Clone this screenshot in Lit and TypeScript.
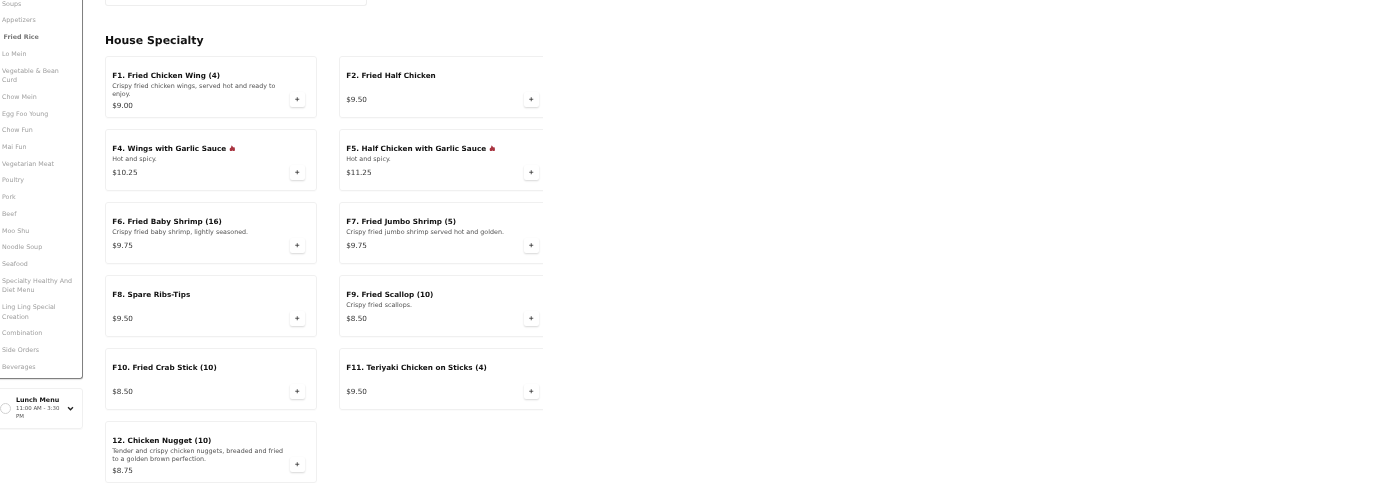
import { LitElement, html, css, nothing } from "lit";
import { customElement } from "lit/decorators.js";

interface Dish {
  name: string;
  desc?: string;
  price: string;
  hot?: boolean;
}

const CATEGORIES = [
  "Soups",
  "Appetizers",
  "Fried Rice",
  "Lo Mein",
  "Vegetable & Bean Curd",
  "Chow Mein",
  "Egg Foo Young",
  "Chow Fun",
  "Mai Fun",
  "Vegetarian Meat",
  "Poultry",
  "Pork",
  "Beef",
  "Moo Shu",
  "Noodle Soup",
  "Seafood",
  "Specialty Healthy And Diet Menu",
  "Ling Ling Special Creation",
  "Combination",
  "Side Orders",
  "Beverages",
];

const DISHES: Dish[] = [
  { name: "F1. Fried Chicken Wing (4)", desc: "Crispy fried chicken wings, served hot and ready to enjoy.", price: "$9.00" },
  { name: "F2. Fried Half Chicken", price: "$9.50" },
  { name: "F4. Wings with Garlic Sauce", desc: "Hot and spicy.", price: "$10.25", hot: true },
  { name: "F5. Half Chicken with Garlic Sauce", desc: "Hot and spicy.", price: "$11.25", hot: true },
  { name: "F6. Fried Baby Shrimp (16)", desc: "Crispy fried baby shrimp, lightly seasoned.", price: "$9.75" },
  { name: "F7. Fried Jumbo Shrimp (5)", desc: "Crispy fried jumbo shrimp served hot and golden.", price: "$9.75" },
  { name: "F8. Spare Ribs-Tips", price: "$9.50" },
  { name: "F9. Fried Scallop (10)", desc: "Crispy fried scallops.", price: "$8.50" },
  { name: "F10. Fried Crab Stick (10)", price: "$8.50" },
  { name: "F11. Teriyaki Chicken on Sticks (4)", price: "$9.50" },
  { name: "12. Chicken Nugget (10)", desc: "Tender and crispy chicken nuggets, breaded and fried to a golden brown perfection.", price: "$8.75" },
];

@customElement("app-root")
export class AppRoot extends LitElement {
  static styles = css`
    :host {
      display: block;
      height: 500px;
      overflow: hidden;
      background: #fff;
      font-family: "DejaVu Sans", sans-serif;
      text-rendering: geometricPrecision;
      color: #111;
    }

    /* the reference is a soft, grayscale downscale of a larger page */
    .page {
      display: flex;
      align-items: flex-start;
      height: 500px;
      overflow: hidden;
      filter: blur(0.3px);
    }

    /* sidebar sticks out past the left edge of the window */
    .side {
      flex: none;
      width: 90px;
      margin-left: -7px;
      margin-top: -8px;
    }

    .cats {
      box-sizing: border-box;
      height: 386.6px;
      padding: 4.1px 9px 0 8px;
      border: 1px solid #808080;
      border-top: none;
      border-radius: 0 0 3px 3px;
      box-shadow: 0 1px 1px rgba(0, 0, 0, 0.12);
    }

    .cat {
      padding: 3.565px 0;
      font-size: 6.35px;
      line-height: 9.6px;
      color: #a0a0a0;
    }

    .cat.active {
      margin-left: 1.5px;
      font-weight: 700;
      color: #777;
    }

    .hours {
      box-sizing: border-box;
      height: 41px;
      margin-top: 9.5px;
      display: flex;
      align-items: center;
      padding: 0 8.5px 0 6px;
      border: 1px solid #f0f0f0;
      border-radius: 3px;
      box-shadow: 0 1px 1px rgba(0, 0, 0, 0.03);
    }

    .radio {
      flex: none;
      box-sizing: border-box;
      width: 11px;
      height: 11px;
      margin-right: 5px;
      border: 1px solid #d0d0d0;
      border-radius: 50%;
    }

    .hours-text {
      flex: 1;
      min-width: 0;
    }

    .hours-title {
      font-size: 6.35px;
      line-height: 10px;
      font-weight: 700;
    }

    .hours-time {
      font-size: 5.45px;
      line-height: 7.8px;
      color: #555;
    }

    .chevron {
      flex: none;
      width: 7px;
      height: 7px;
      margin-left: 4px;
    }

    .main {
      flex: none;
      width: 438px;
      margin-left: 22px;
      overflow: hidden;
    }

    .prev {
      box-sizing: border-box;
      width: 262px;
      height: 6px;
      border: 1px solid #eee;
      border-top: none;
      border-radius: 0 0 3px 3px;
    }

    h2 {
      margin: 26.5px 0 0;
      font-size: 10.9px;
      line-height: 15px;
      font-weight: 700;
    }

    .grid {
      display: grid;
      grid-template-columns: 212px 212px;
      column-gap: 22px;
      row-gap: 11px;
      margin-top: 8.5px;
      width: 446px;
    }

    .card {
      box-sizing: border-box;
      height: 62px;
      display: flex;
      align-items: flex-end;
      padding: 0 11px 10px 6.2px;
      border: 1px solid #f0f0f0;
      border-radius: 3px;
      box-shadow: 0 1px 1px rgba(0, 0, 0, 0.02);
    }

    .info {
      flex: 1;
      min-width: 0;
      align-self: stretch;
      padding-top: 12.5px;
      padding-right: 6.5px;
    }

    .name {
      display: flex;
      align-items: center;
      gap: 2.5px;
      font-size: 7.25px;
      line-height: 11px;
      font-weight: 700;
    }

    .desc {
      display: flex;
      align-items: center;
      margin-top: 2px;
      min-height: 9.6px;
      font-size: 6.35px;
      line-height: 8px;
      color: #555;
    }

    .price {
      margin-top: 1.6px;
      font-size: 7.25px;
      line-height: 11px;
      color: #333;
    }

    .add {
      flex: none;
      box-sizing: border-box;
      width: 15px;
      height: 15px;
      display: flex;
      align-items: center;
      justify-content: center;
      border: none;
      border-radius: 2px;
      padding: 0;
      background: #fff;
      box-shadow: 0 1px 2px rgba(0, 0, 0, 0.16);
    }

    .add svg {
      width: 4.5px;
      height: 4.5px;
    }

    .flame {
      width: 6.5px;
      height: 6.5px;
    }
  `;

  private renderCard(d: Dish) {
    return html`
      <div class="card">
        <div class="info">
          <div class="name">
            <span>${d.name}</span>
            ${d.hot
              ? html`<svg class="flame" viewBox="0 0 10 10">
                  <path fill="#a83440" d="M4.2 0.5 C5 2 6.4 2.6 6.9 4 L8 3 C9.4 5 9.4 7 8.6 9.5 L5.6 9.5 L5 7.8 L4.2 9.5 L1.8 9.5 C0.6 7.4 0.9 5.2 2.2 4 L3 5 C3 3.4 3.4 1.8 4.2 0.5 Z" />
                </svg>`
              : nothing}
          </div>
          <div class="desc"><span>${d.desc ?? ""}</span></div>
          <div class="price">${d.price}</div>
        </div>
        <button class="add" aria-label="Add">
          <svg viewBox="0 0 10 10"><path d="M5 0.5 V9.5 M0.5 5 H9.5" stroke="#333" stroke-width="1.8" /></svg>
        </button>
      </div>
    `;
  }

  render() {
    return html`
      <div class="page">
        <div class="side">
          <div class="cats">
            ${CATEGORIES.map(
              (c) => html`<div class="cat ${c === "Fried Rice" ? "active" : ""}">${c}</div>`
            )}
          </div>
          <div class="hours">
            <span class="radio"></span>
            <div class="hours-text">
              <div class="hours-title">Lunch Menu</div>
              <div class="hours-time">11:00 AM - 3:30 PM</div>
            </div>
            <svg class="chevron" viewBox="0 0 10 10">
              <path d="M1.5 3.2 L5 6.8 L8.5 3.2" fill="none" stroke="#222" stroke-width="1.9" />
            </svg>
          </div>
        </div>
        <div class="main">
          <div class="prev"></div>
          <h2>House Specialty</h2>
          <div class="grid">${DISHES.map((d) => this.renderCard(d))}</div>
        </div>
      </div>
    `;
  }
}
